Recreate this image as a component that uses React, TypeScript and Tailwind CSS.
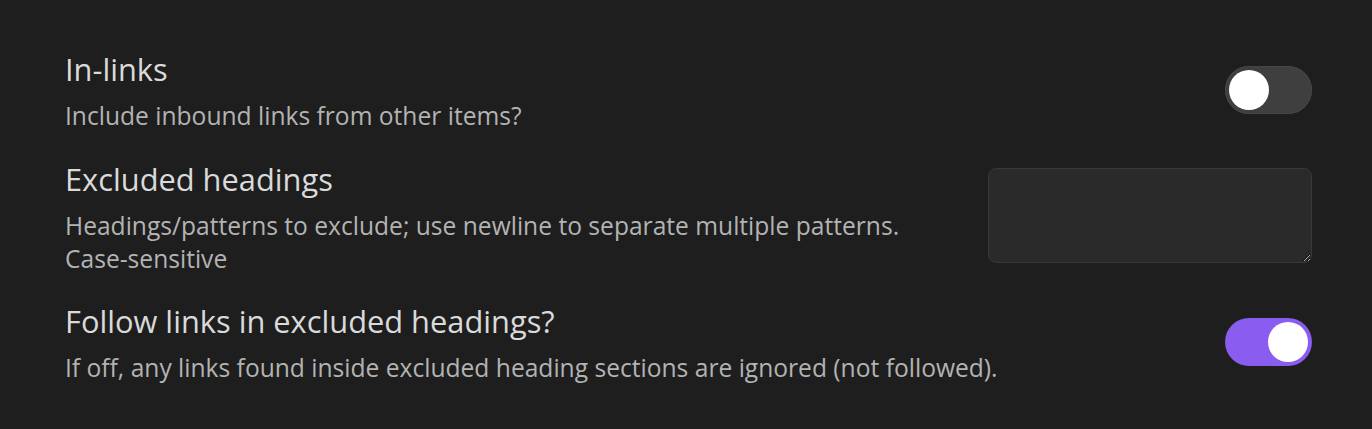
import React from "react";

function Toggle({ on }: { on: boolean }) {
  return (
    <div
      className={
        "relative h-[48px] w-[87px] shrink-0 rounded-full " +
        (on ? "bg-[#8a5cf0]" : "bg-[#3f3f3f] shadow-[inset_0_0_0_1px_#464646]")
      }
    >
      <div
        className={
          "absolute top-[4px] h-[40px] w-[40px] rounded-full bg-white " +
          (on ? "left-[43px]" : "left-[4px]")
        }
      />
    </div>
  );
}

function Row({
  title,
  desc,
  control,
}: {
  title: string;
  desc: React.ReactNode;
  control: React.ReactNode;
}) {
  return (
    <div className="flex items-center justify-between gap-6">
      <div className="flex flex-col gap-[8px]">
        <div className="text-[30.8px] leading-[44px] text-[#dadada]">{title}</div>
        <div className="text-[24.6px] leading-[33px] text-[#b3b3b3]">{desc}</div>
      </div>
      {control}
    </div>
  );
}

export default function App() {
  return (
    <div
      className="h-[429px] w-[1372px] bg-[#1e1e1e] pl-[65px] pr-[60px] pt-[47px]"
      style={{ fontFamily: '"Open Sans", "Noto Sans", sans-serif' }}
    >
      <div className="flex flex-col gap-[24.5px]">
        <Row
          title="In-links"
          desc="Include inbound links from other items?"
          control={<Toggle on={false} />}
        />
        <Row
          title="Excluded headings"
          desc={
            <>
              Headings/patterns to exclude; use newline to separate multiple patterns.
              <br />
              Case-sensitive
            </>
          }
          control={
            <textarea className="h-[95px] w-[324px] shrink-0 rounded-[8px] border border-[#383838] bg-[#2a2a2a] text-[#dadada] outline-none" />
          }
        />
        <Row
          title="Follow links in excluded headings?"
          desc="If off, any links found inside excluded heading sections are ignored (not followed)."
          control={<Toggle on={true} />}
        />
      </div>
    </div>
  );
}
